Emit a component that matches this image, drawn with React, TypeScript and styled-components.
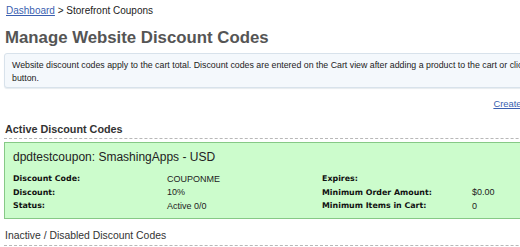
import React from "react";
import styled, { createGlobalStyle } from "styled-components";

const Global = createGlobalStyle`
  html, body { margin: 0; padding: 0; background: #fff; overflow: hidden; }
  body { font-family: "Liberation Sans", Arial, sans-serif; color: #222; }
`;

const Page = styled.div`
  width: 640px;
  padding-left: 4px;
  display: flex;
  flex-direction: column;
`;

const Breadcrumb = styled.div`
  font-size: 10px;
  line-height: 22px;
  padding-left: 2px;
  color: #222;
`;

const Link = styled.a`
  color: #3a5fb0;
  text-decoration: underline;
  cursor: pointer;
`;

const Title = styled.h1`
  margin: 7px 0 0 1px;
  font-size: 16.8px;
  line-height: 18px;
  font-weight: bold;
  color: #555;
`;

const InfoBox = styled.div`
  margin-top: 6px;
  border: 1px solid #d8e2eb;
  border-radius: 3px;
  background: #f4f8fc;
  padding: 5px 0 2px 7px;
  font-size: 8.8px;
  line-height: 13px;
  color: #222;
  box-shadow: 0 1px 1px #e6ebef;
`;

const ActionRow = styled.div`
  margin-top: 8px;
  display: flex;
  justify-content: flex-end;
  padding-right: 37px;
  font-size: 9.4px;
  line-height: 16px;
`;

const SectionHeading = styled.h2<{ $bold?: boolean }>`
  margin: 10px 0 0 0;
  padding: 0 0 2px 1px;
  font-size: ${(p) => (p.$bold ? "10.8px" : "10.4px")};
  line-height: 14px;
  font-weight: ${(p) => (p.$bold ? "bold" : "normal")};
  color: #333;
  border-bottom: 1px dashed #b8b8b8;
`;

const CouponCard = styled.div`
  margin-top: 3px;
  background: #ccfccc;
  border: 1px solid #86c986;
  padding: 6px 0 5px 8px;
`;

const CouponTitle = styled.div`
  font-size: 12px;
  line-height: 16px;
  color: #222;
`;

const DetailGrid = styled.div`
  margin-top: 7px;
  display: grid;
  grid-template-columns: 154px 155px 150px auto;
  grid-auto-rows: 13.5px;
  align-items: center;
`;

const Label = styled.span`
  font-family: "DejaVu Sans", Verdana, sans-serif;
  font-weight: bold;
  font-size: 7.9px;
  color: #111;
`;

const Value = styled.span`
  font-size: 9px;
  color: #222;
`;

const rows: [string, string, string, string][] = [
  ["Discount Code:", "COUPONME", "Expires:", ""],
  ["Discount:", "10%", "Minimum Order Amount:", "$0.00"],
  ["Status:", "Active 0/0", "Minimum Items in Cart:", "0"],
];

export default function App() {
  return (
    <>
      <Global />
      <Page>
        <Breadcrumb>
          <Link>Dashboard</Link> &gt; Storefront Coupons
        </Breadcrumb>
        <Title>Manage Website Discount Codes</Title>
        <InfoBox>
          Website discount codes apply to the cart total. Discount codes are entered on the Cart view after adding a product to the cart or clicking the
          <br />
          button.
        </InfoBox>
        <ActionRow>
          <Link>Create New Discount Code</Link>
        </ActionRow>
        <SectionHeading $bold>Active Discount Codes</SectionHeading>
        <CouponCard>
          <CouponTitle>dpdtestcoupon: SmashingApps - USD</CouponTitle>
          <DetailGrid>
            {rows.map((r) => (
              <React.Fragment key={r[0]}>
                <Label>{r[0]}</Label>
                <Value>{r[1]}</Value>
                <Label>{r[2]}</Label>
                <Value>{r[3]}</Value>
              </React.Fragment>
            ))}
          </DetailGrid>
        </CouponCard>
        <SectionHeading>Inactive / Disabled Discount Codes</SectionHeading>
      </Page>
    </>
  );
}
